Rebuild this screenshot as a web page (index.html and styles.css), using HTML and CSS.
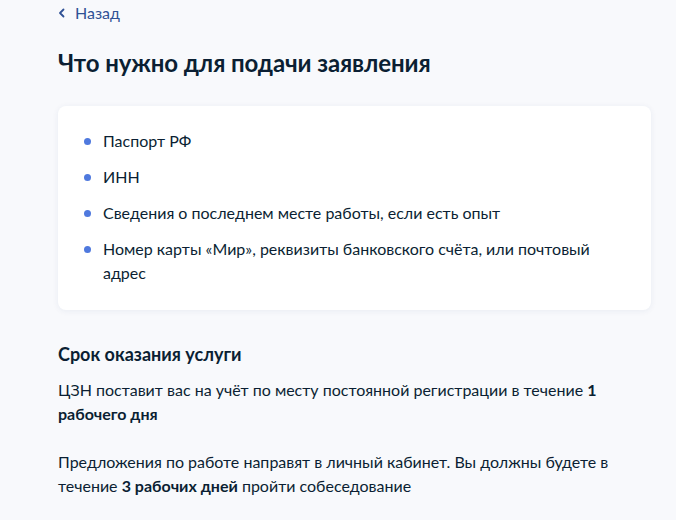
FILE: index.html
```html
<!DOCTYPE html>
<html lang="ru">
<head>
<meta charset="utf-8">
<link rel="stylesheet" href="styles.css">
</head>
<body>
<div class="page">
  <a class="back" href="#">
    <svg class="chev" width="8" height="10" viewBox="0 0 8 10"><path d="M5.5 1.5 L2 5 L5.5 8.5" fill="none" stroke="currentColor" stroke-width="1.8" stroke-linecap="round" stroke-linejoin="round"/></svg>
    <span>Назад</span>
  </a>
  <h1 class="title">Что нужно для подачи заявления</h1>
  <div class="card">
    <ul class="list">
      <li>Паспорт РФ</li>
      <li>ИНН</li>
      <li>Сведения о последнем месте работы, если есть опыт</li>
      <li>Номер карты «Мир», реквизиты банковского счёта, или почтовый адрес</li>
    </ul>
  </div>
  <h2 class="subtitle">Срок оказания услуги</h2>
  <p class="text">ЦЗН поставит вас на учёт по месту постоянной регистрации в течение <b>1 рабочего дня</b></p>
  <p class="text">Предложения по работе направят в личный кабинет. Вы должны будете в течение <b>3 рабочих дней</b> пройти собеседование</p>
</div>
</body>
</html>
```

FILE: styles.css
```css
html, body {
  margin: 0;
  padding: 0;
  background: #f8f9fc;
}
body {
  font-family: Lato, "Noto Sans", sans-serif;
  color: #0b1f33;
}
.page {
  width: 593px;
  padding: 1px 0 0 58px;
}
.back {
  display: flex;
  align-items: center;
  gap: 9px;
  color: #2f5195;
  text-decoration: none;
  font-size: 16px;
  line-height: 24px;
  height: 24px;
}
.chev {
  display: block;
}
.title {
  margin: 22px 0 0;
  font-size: 24px;
  line-height: 32px;
  font-weight: 700;
  letter-spacing: -0.1px;
  color: #0b1f33;
}
.card {
  margin-top: 27px;
  background: #fff;
  border-radius: 8px;
  box-shadow: 0 1px 6px rgba(30, 60, 120, 0.07);
  padding: 23px 24px 25px 25px;
}
.list {
  list-style: none;
  margin: 0;
  padding: 0;
  display: flex;
  flex-direction: column;
  gap: 12px;
}
.list li {
  position: relative;
  padding-left: 20px;
  font-size: 16px;
  line-height: 24px;
  max-width: 490px;
}
.list li::before {
  content: "";
  position: absolute;
  left: 1px;
  top: 9px;
  width: 7px;
  height: 7px;
  border-radius: 50%;
  background: #4f79de;
}
.subtitle {
  margin: 32px 0 0;
  font-size: 18px;
  line-height: 24px;
  font-weight: 700;
}
.text {
  margin: 12px 0 0;
  font-size: 16px;
  line-height: 24px;
  width: 560px;
}
.text + .text {
  margin-top: 24px;
}
.text b {
  font-weight: 700;
}
```
